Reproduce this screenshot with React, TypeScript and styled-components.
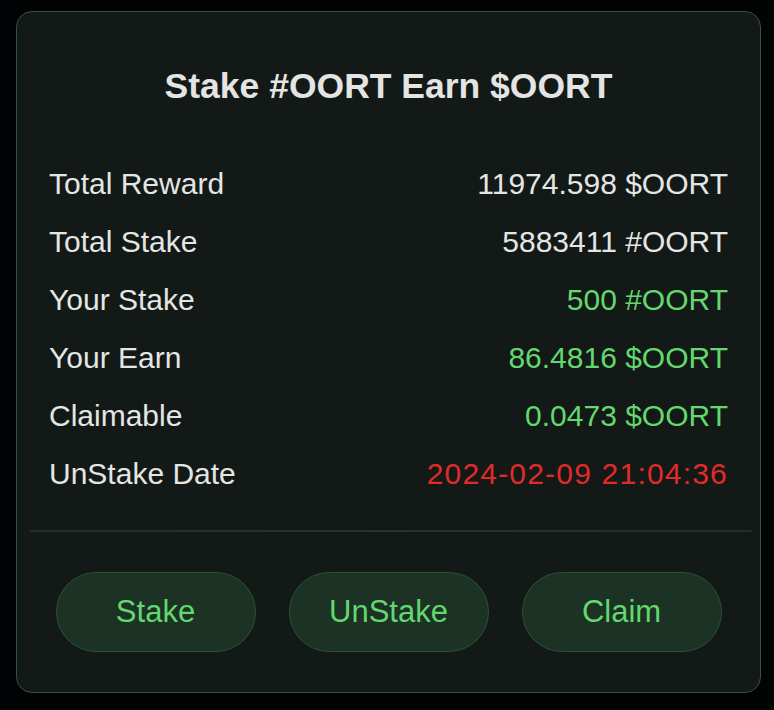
import React from 'react';
import styled, { createGlobalStyle } from 'styled-components';

const GlobalStyle = createGlobalStyle`
  html, body {
    margin: 0;
    padding: 0;
    background: #020305;
  }
  body {
    font-family: 'Liberation Sans', Arial, sans-serif;
  }
`;

type Tone = 'plain' | 'green' | 'red';

const rows: { label: string; value: string; tone: Tone }[] = [
  { label: 'Total Reward', value: '11974.598 $OORT', tone: 'plain' },
  { label: 'Total Stake', value: '5883411 #OORT', tone: 'plain' },
  { label: 'Your Stake', value: '500 #OORT', tone: 'green' },
  { label: 'Your Earn', value: '86.4816 $OORT', tone: 'green' },
  { label: 'Claimable', value: '0.0473 $OORT', tone: 'green' },
  { label: 'UnStake Date', value: '2024-02-09 21:04:36', tone: 'red' },
];

const toneColor: Record<Tone, string> = {
  plain: '#e4e6e5',
  green: '#62d86f',
  red: '#e12a2a',
};

export default function App() {
  return (
    <Page>
      <GlobalStyle />
      <Card>
        <Title>Stake #OORT Earn $OORT</Title>
        <List>
          {rows.map(row => (
            <Row key={row.label}>
              <Label>{row.label}</Label>
              <Value $tone={row.tone}>{row.value}</Value>
            </Row>
          ))}
        </List>
        <Divider />
        <Actions>
          <Button>Stake</Button>
          <Button>UnStake</Button>
          <Button>Claim</Button>
        </Actions>
      </Card>
    </Page>
  );
}

const Page = styled.div`
  padding: 11px 0 0 16px;
  min-height: 710px;
  box-sizing: border-box;
`;

const Card = styled.div`
  box-sizing: border-box;
  width: 745px;
  height: 682px;
  background-color: #131916;
  border: 1.5px solid #34553b;
  border-radius: 16px;
  display: flex;
  flex-direction: column;
`;

const Title = styled.h1`
  margin: 54px 0 0;
  height: 40px;
  line-height: 40px;
  text-align: center;
  font-size: 35.5px;
  font-weight: 700;
  color: #e3e4e3;
`;

const List = styled.div`
  margin-top: 49px;
  padding: 0 32px;
  display: flex;
  flex-direction: column;
`;

const Row = styled.div`
  height: 58px;
  display: flex;
  align-items: center;
  justify-content: space-between;
  font-size: 30px;
`;

const Label = styled.span`
  color: #e4e6e5;
`;

const Value = styled.span<{ $tone: Tone }>`
  color: ${p => toneColor[p.$tone]};
  letter-spacing: ${p => (p.$tone === 'red' ? '1.2px' : '0')};
`;

const Divider = styled.div`
  margin: 27px 8px 0 13px;
  height: 1.5px;
  background: linear-gradient(90deg, #252c28, #2b332e 50%, #252c28);
`;

const Actions = styled.div`
  margin-top: 40px;
  display: flex;
  justify-content: center;
  gap: 33px;
`;

const Button = styled.button`
  box-sizing: border-box;
  width: 200px;
  height: 80px;
  border-radius: 40px;
  background-color: #1c3224;
  border: 1.5px solid #2e5036;
  color: #62d86f;
  font-family: 'Liberation Sans', Arial, sans-serif;
  font-size: 31px;
  cursor: pointer;
`;
